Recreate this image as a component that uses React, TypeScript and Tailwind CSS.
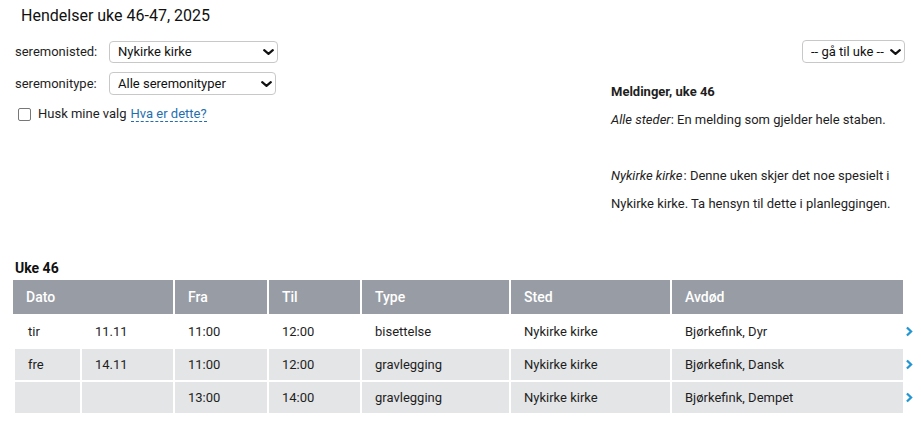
import type { ReactNode } from 'react';

type Row = { day: string; date: string; from: string; to: string; type: string; place: string; name: string; shaded: boolean };

const ROWS: Row[] = [
  { day: 'tir', date: '11.11', from: '11:00', to: '12:00', type: 'bisettelse', place: 'Nykirke kirke', name: 'Bjørkefink, Dyr', shaded: false },
  { day: 'fre', date: '14.11', from: '11:00', to: '12:00', type: 'gravlegging', place: 'Nykirke kirke', name: 'Bjørkefink, Dansk', shaded: true },
  { day: '', date: '', from: '13:00', to: '14:00', type: 'gravlegging', place: 'Nykirke kirke', name: 'Bjørkefink, Dempet', shaded: true },
];

function Chevron() {
  return (
    <svg width="11" height="6" viewBox="0 0 11 6" className="pointer-events-none absolute right-[4px] top-1/2 -translate-y-1/2">
      <path d="M1.2 1.2 5.5 4.8 9.8 1.2" fill="none" stroke="#111" strokeWidth="2.2" strokeLinecap="round" strokeLinejoin="round" />
    </svg>
  );
}

function Select({ value, className }: { value: string; className: string }) {
  return (
    <div className={`relative ${className}`}>
      <select className="h-full w-full appearance-none rounded-[4px] border border-[#c8c8c8] bg-white pl-[8px] pr-[14px] text-[13px] text-[#111] outline-none">
        <option>{value}</option>
      </select>
      <Chevron />
    </div>
  );
}

function Cell({ children, shaded, head }: { children?: ReactNode; shaded?: boolean; head?: boolean }) {
  return (
    <div
      className={`flex items-center pl-[13px] ${
        head ? 'h-[34px] bg-[#989da5] text-[14px] font-medium text-white' : `h-[31px] text-[13px] text-[#1e1e1e] ${shaded ? 'bg-[#e4e5e7]' : ''}`
      }`}
    >
      {children}
    </div>
  );
}

export default function App() {
  return (
    <div className="min-h-[423px] bg-white pl-[13px] pr-[8px] font-['Roboto','Liberation_Sans',sans-serif] text-[13px] text-[#1e1e1e]">
      <h1 className="pl-[8px] pt-[4px] text-[16px] leading-[24px] font-normal text-[#111]">Hendelser uke 46-47, 2025</h1>

      <div className="mt-[12px] flex justify-between pr-[8px]">
        <div className="pt-[1px]">
          <div className="flex h-[22px] items-center">
            <span className="w-[96px] pl-[2px]">seremonisted:</span>
            <Select value="Nykirke kirke" className="h-[22px] w-[169px]" />
          </div>
          <div className="mt-[9px] flex h-[23px] items-center">
            <span className="w-[96px] pl-[2px]">seremonitype:</span>
            <Select value="Alle seremonityper" className="h-[23px] w-[167px]" />
          </div>
          <div className="mt-[9px] flex h-[20px] items-center">
            <input type="checkbox" className="ml-[5px] mr-[7px] h-[13px] w-[13px] appearance-none rounded-[2px] border border-[#777] bg-white" />
            <span>Husk mine valg</span>
            <a href="#" className="ml-[4px] border-b border-dashed border-[#1f6fb0] leading-[15px] text-[#1f6fb0]">Hva er dette?</a>
          </div>
        </div>

        <div className="flex w-[294px] flex-col">
          <Select value="-- gå til uke --" className="h-[23px] w-[103px] self-end" />
          <div className="mt-[15px] leading-[28px]">
            <p className="font-bold">Meldinger, uke 46</p>
            <p>
              <em>Alle steder</em>: En melding som gjelder hele staben.
            </p>
            <p>&nbsp;</p>
            <p>
              <em className="pr-px">Nykirke kirke</em>: Denne uken skjer det noe spesielt i Nykirke kirke. Ta hensyn til dette i planleggingen.
            </p>
          </div>
        </div>
      </div>

      <h2 className="mt-[40px] pl-[2px] text-[14px] leading-[20px] font-bold text-[#111]">Uke 46</h2>

      <div className="mt-[2px] grid w-[890px] grid-cols-[160px_92px_91px_147px_159px_231px] gap-[2px]">
        <Cell head>Dato</Cell>
        <Cell head>Fra</Cell>
        <Cell head>Til</Cell>
        <Cell head>Type</Cell>
        <Cell head>Sted</Cell>
        <Cell head>Avdød</Cell>
      </div>

      <div className="mt-[2px] flex flex-col gap-[2px]">
        {ROWS.map((r, i) => (
          <div key={i} className="flex items-center">
            <div className="ml-[2px] grid grid-cols-[65px_91px_92px_91px_147px_159px_231px] gap-[2px]">
              <Cell shaded={r.shaded}>{r.day}</Cell>
              <Cell shaded={r.shaded}>{r.date}</Cell>
              <Cell shaded={r.shaded}>{r.from}</Cell>
              <Cell shaded={r.shaded}>{r.to}</Cell>
              <Cell shaded={r.shaded}>{r.type}</Cell>
              <Cell shaded={r.shaded}>{r.place}</Cell>
              <Cell shaded={r.shaded}>{r.name}</Cell>
            </div>
            <svg width="8" height="11" viewBox="0 0 8 11" className="ml-[3px]">
              <path d="M2 1.8 5.8 5.5 2 9.2" fill="none" stroke="#2196d3" strokeWidth="2.6" strokeLinecap="square" strokeLinejoin="miter" />
            </svg>
          </div>
        ))}
      </div>
    </div>
  );
}
